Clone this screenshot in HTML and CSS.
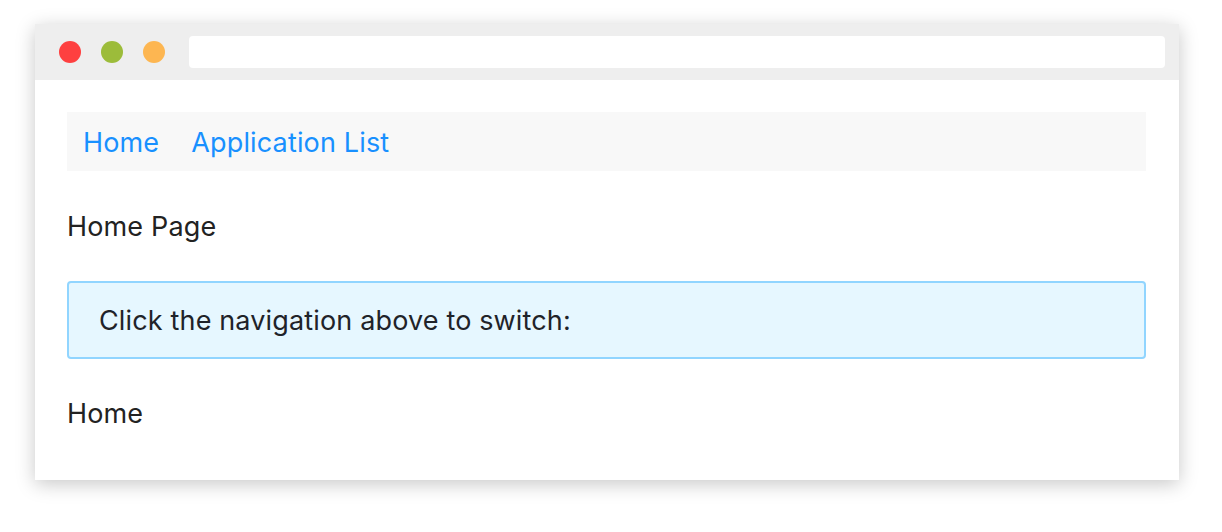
FILE: index.html
```html
<!DOCTYPE html>
<html>
<head>
<meta charset="utf-8">
<link rel="stylesheet" href="styles.css">
</head>
<body>
<div class="window">
  <div class="titlebar">
    <span class="dot red"></span>
    <span class="dot green"></span>
    <span class="dot yellow"></span>
    <div class="address"></div>
  </div>
  <div class="content">
    <nav class="nav">
      <a class="nav-link">Home</a>
      <a class="nav-link">Application List</a>
    </nav>
    <p class="text page-title">Home Page</p>
    <div class="info">Click the navigation above to switch:</div>
    <p class="text route">Home</p>
  </div>
</div>
</body>
</html>
```
FILE: styles.css
```css
html, body {
  margin: 0;
  padding: 0;
  background: #ffffff;
}
body {
  padding: 24px 0 52px 35px;
  min-height: 532px;
  box-sizing: border-box;
  font-family: Inter, "Liberation Sans", Arial, sans-serif;
  letter-spacing: 0.15px;
}
.window {
  width: 1144px;
  height: 456px;
  background: #ffffff;
  box-shadow: 0 4px 18px rgba(0, 0, 0, 0.22);
  display: flex;
  flex-direction: column;
}
.titlebar {
  height: 56px;
  background: #eeeeee;
  display: flex;
  align-items: center;
  padding: 0 14px 0 24px;
  box-sizing: border-box;
}
.dot {
  width: 22px;
  height: 22px;
  border-radius: 50%;
  margin-right: 20px;
  flex: none;
}
.red { background: #fe4040; }
.green { background: #9cbc3a; }
.yellow { background: #fdb651; }
.address {
  flex: 1;
  height: 32px;
  margin-left: 4px;
  background: #ffffff;
  border-radius: 4px;
}
.content {
  padding: 32px 33px 0 32px;
}
.nav {
  height: 59px;
  background: #f8f8f8;
  display: flex;
  align-items: center;
  padding-left: 16px;
  gap: 32px;
}
.nav-link {
  color: #1890ff;
  font-size: 27px;
  text-decoration: none;
  padding-top: 2px;
}
.text {
  margin: 0;
  color: #222222;
  font-size: 27px;
}
.page-title {
  margin-top: 38px;
  line-height: 36px;
}
.info {
  margin-top: 36px;
  height: 78px;
  box-sizing: border-box;
  border: 2px solid #91d5ff;
  background: #e6f7ff;
  border-radius: 4px;
  display: flex;
  align-items: center;
  padding-left: 30px;
  color: #1f2329;
  font-size: 27px;
}
.route {
  margin-top: 37px;
  line-height: 36px;
}
```
